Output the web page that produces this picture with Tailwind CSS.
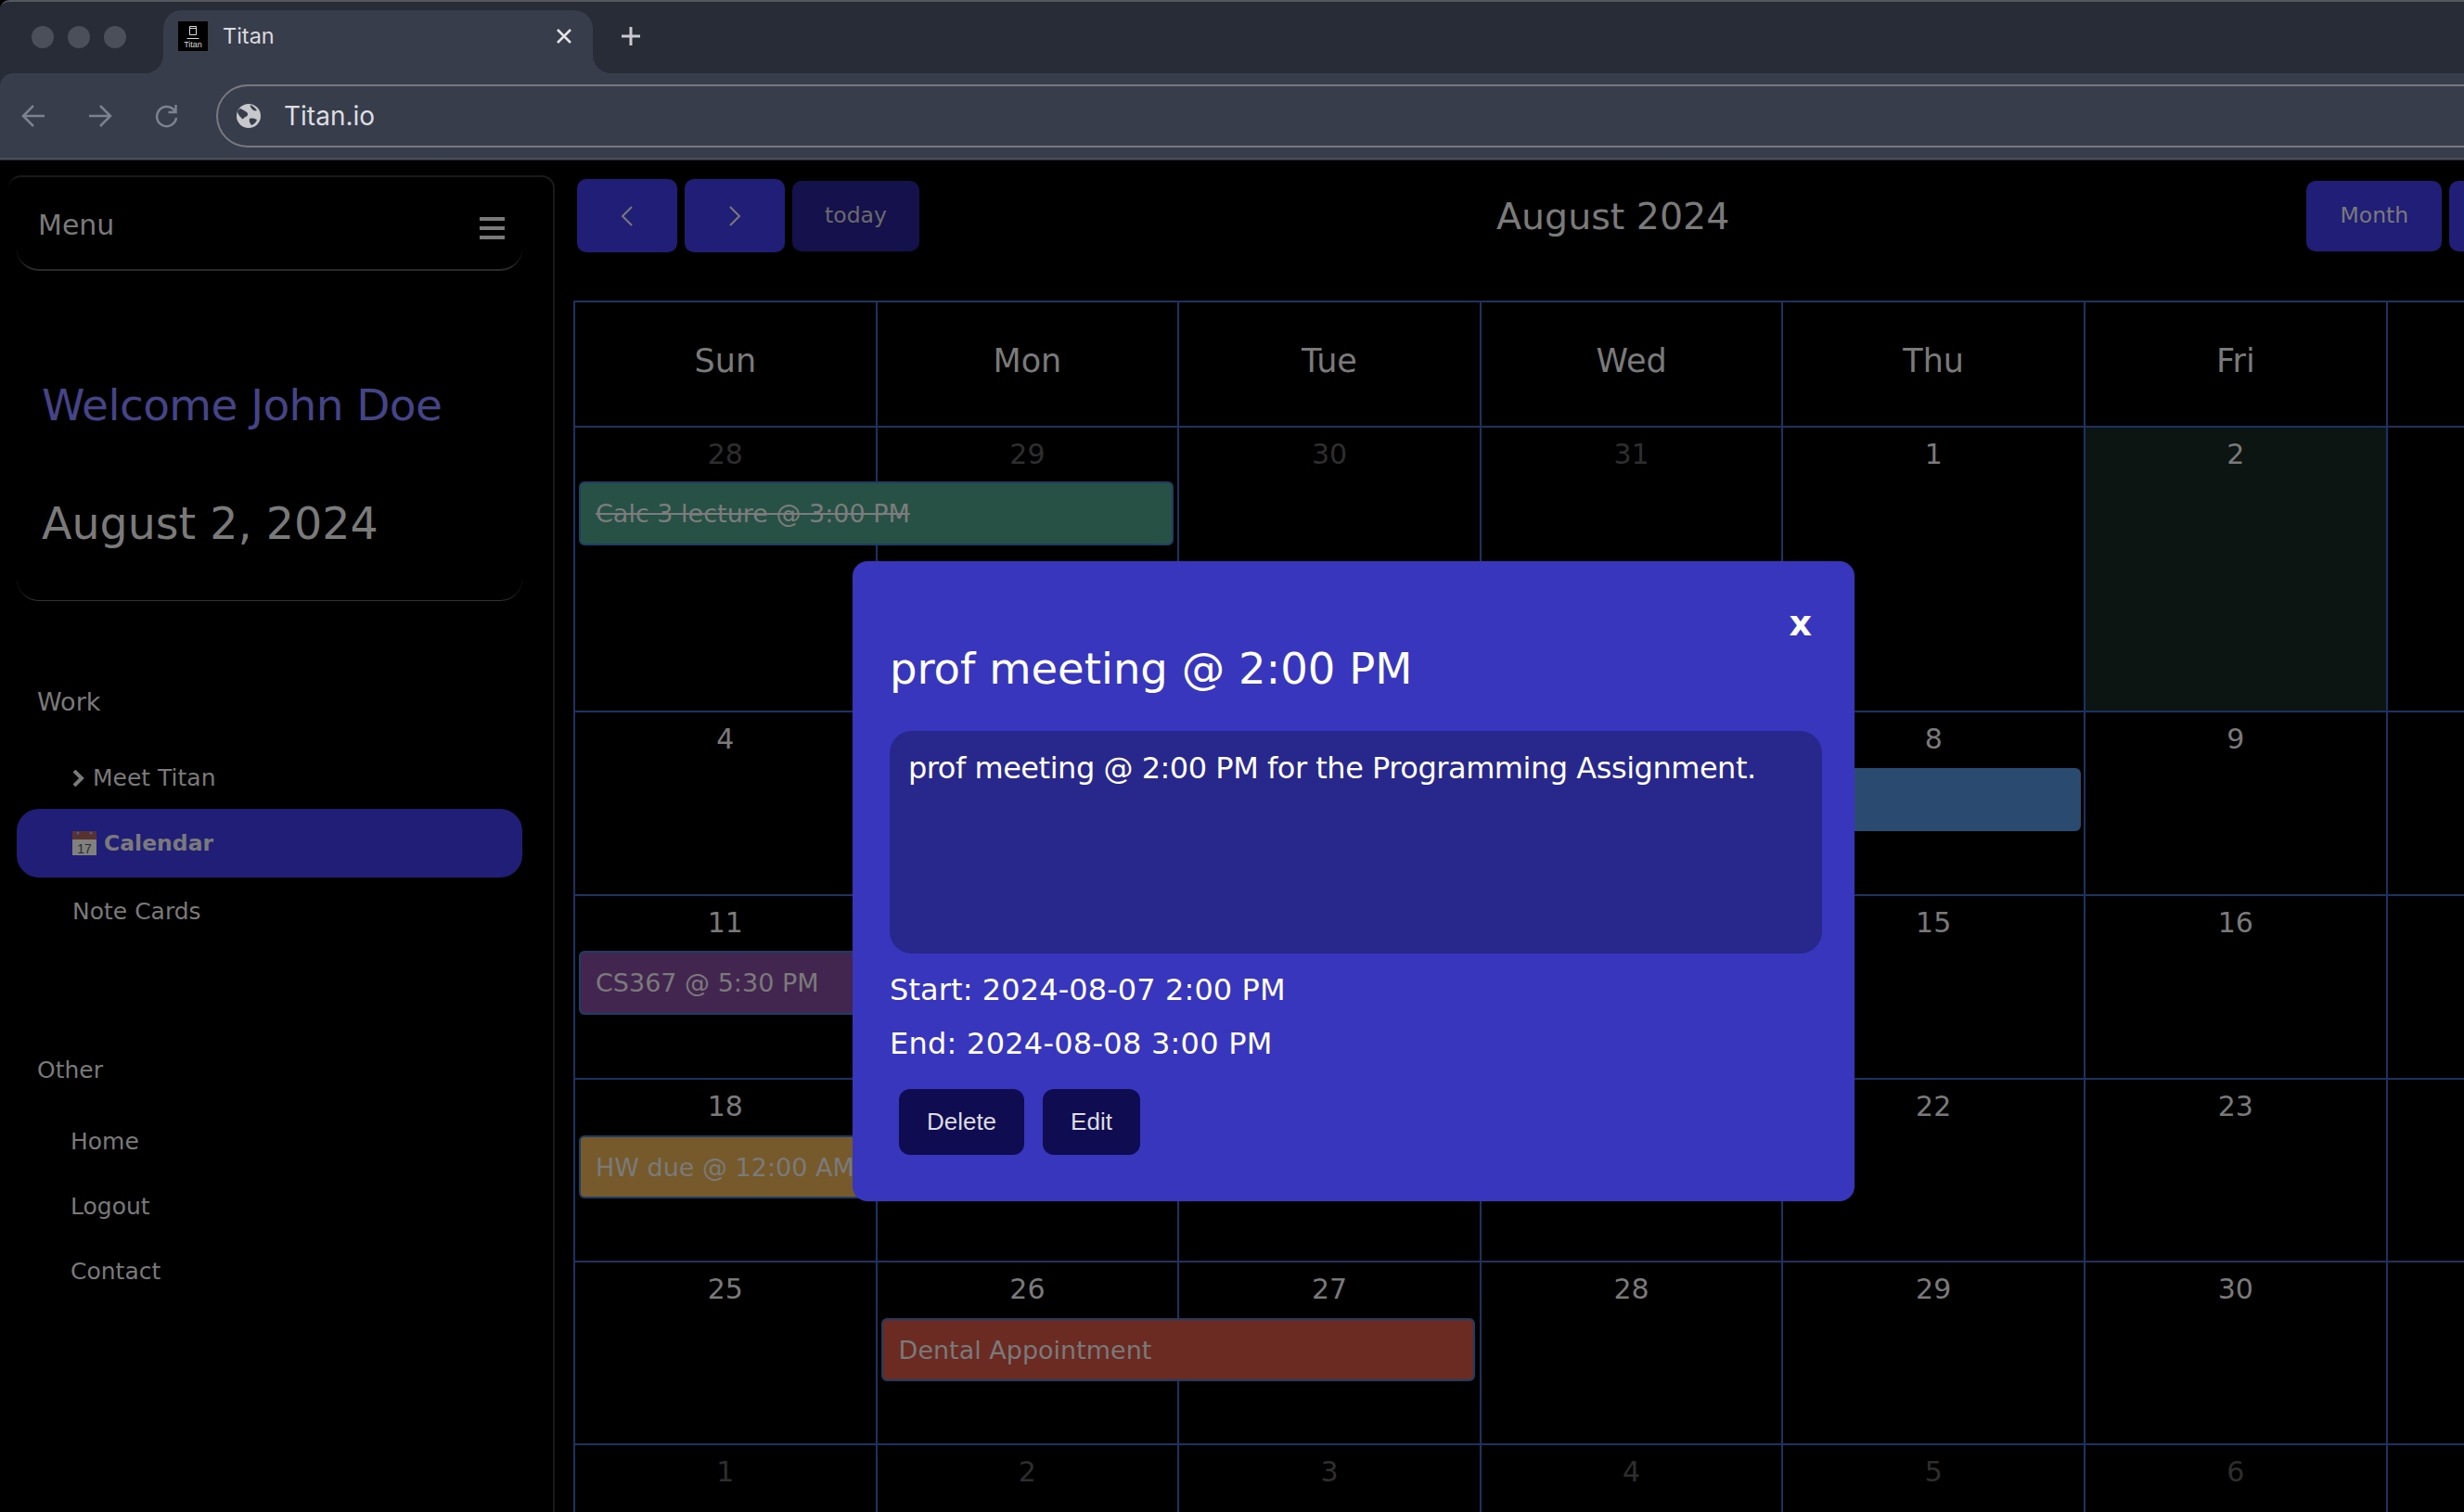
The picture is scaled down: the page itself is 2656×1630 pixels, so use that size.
<!DOCTYPE html>
<html lang="en">

<head>
    <meta charset="UTF-8">
    <meta name="viewport" content="width=device-width, initial-scale=1.0">
    <title>Titan</title>
    <script src="https://cdn.jsdelivr.net/npm/@tailwindcss/browser@4"></script>
</head>

<body class="relative w-[2656px] h-[1630px] overflow-hidden bg-black font-['DejaVu_Sans',sans-serif] text-[#7a7a7a]">
    <!-- Browser chrome -->
    <header class="h-[173px] bg-[#282c36] border-t-2 border-[#55575f] rounded-tl-[10px] font-['Inter',sans-serif]">
        <div class="flex h-[77px] items-end">
            <div class="flex gap-[15px] w-[176px] h-full pl-[34px] pt-[26px]">
                <span class="w-6 h-6 rounded-full bg-[#4b4f5a]"></span>
                <span class="w-6 h-6 rounded-full bg-[#4b4f5a]"></span>
                <span class="w-6 h-6 rounded-full bg-[#4b4f5a]"></span>
            </div>
            <div class="relative flex items-center w-[463px] h-[68px] pl-4 pb-[12px] bg-[#383d4c] rounded-t-[20px]">
                <span class="absolute -left-5 bottom-0 w-5 h-5 bg-[#383d4c]"><span class="block w-full h-full bg-[#282c36] rounded-br-[20px]"></span></span>
                <span class="absolute -right-5 bottom-0 w-5 h-5 bg-[#383d4c]"><span class="block w-full h-full bg-[#282c36] rounded-bl-[20px]"></span></span>
                <div class="flex flex-col items-center justify-end w-8 h-8 bg-black text-white pb-[3px]">
                    <svg width="16" height="16" viewBox="0 0 16 16" fill="none" stroke="#d8d8d8" stroke-width="1"><path d="M4.500 1.500h7v9h-7zM4.500 3.500h7M1.500 14.500h13"/></svg>
                    <span class="font-['Liberation_Sans',sans-serif] text-[9px] leading-[8px] text-[#d8d8d8] mt-[1px]">Titan</span>
                </div>
                <span class="ml-4 text-[23.500px] text-[#d9dade]">Titan</span>
                <svg class="ml-auto mr-[22px]" width="18" height="18" viewBox="0 0 18 18" fill="none" stroke="#e4e4e6" stroke-width="2.500"><path d="M2 2l14 14M16 2L2 16"/></svg>
            </div>
            <svg class="ml-[30px] mb-[29px]" width="22" height="22" viewBox="0 0 22 22" fill="none" stroke="#c9cad0" stroke-width="3"><path d="M11 1v20M1 11h20"/></svg>
        </div>
        <div class="flex items-center h-[93px] bg-[#383d4c] rounded-tl-[14px] border-b-2 border-[#4a4d58]">
            <svg class="ml-[23px] shrink-0" width="26" height="26" viewBox="0 0 26 26" fill="none" stroke="#7d828e" stroke-width="2.500"><path d="M25 13H2M13 2L2 13l11 11"/></svg>
            <svg class="ml-[46px] shrink-0" width="26" height="26" viewBox="0 0 26 26" fill="none" stroke="#7d828e" stroke-width="2.500"><path d="M1 13h23M13 2l11 11-11 11"/></svg>
            <svg class="ml-[46px] shrink-0" width="26" height="26" viewBox="0 0 26 26" fill="none" stroke="#7d828e" stroke-width="2.500"><path d="M21.500 8A10.500 10.500 0 1 0 23 15M22.500 1v8h-8"/></svg>
            <div class="flex items-center ml-[40px] w-[2500px] h-[68px] shrink-0 border-2 border-[#77797f] rounded-full pl-[19px]">
                <svg width="28" height="28" viewBox="0 0 28 28">
                    <circle cx="14" cy="14" r="13" fill="#c6c8cc"/>
                    <path d="M5 6c3 1 5 3 7 4 2 2 1 4-1 5-2 0-2 3-4 2-2-2-4-4-5-7 0-2 1-3 3-4zM15 17c3-1 6 0 8 1-1 3-3 5-6 6-1-2-3-4-2-7zM16 2c2 1 5 3 7 6-2 1-4 0-5-1-1-2-3-3-2-5z" fill="#383d4c"/>
                </svg>
                <span class="ml-[24px] text-[28px] text-[#dcdde1]">Titan.io</span>
            </div>
        </div>
    </header>

    <main class="flex">
        <!-- Sidebar -->
        <aside class="w-[589px] h-[1457px] shrink-0 mt-4 ml-[9px] pl-[9px] pr-[33px] border-t-2 border-r-2 border-[#1a1a1a] rounded-t-[14px]">
            <div class="flex items-center justify-between h-[101px] pl-[23px] pr-[19px] border-b-2 border-[#2a2a2a] rounded-b-[24px]">
                <span class="text-[30px] mt-[3px]">Menu</span>
                <div class="flex flex-col gap-[6px] mt-[10px]">
                    <span class="block w-[27px] h-[4px] bg-[#7a7a7a]"></span>
                    <span class="block w-[27px] h-[4px] bg-[#7a7a7a]"></span>
                    <span class="block w-[27px] h-[4px] bg-[#7a7a7a]"></span>
                </div>
            </div>

            <div class="h-[356px] pl-[27px] pt-[115px] border-b border-[#333] rounded-b-[24px]">
                <h1 class="text-[47px] tracking-[-0.6px] leading-[60px] text-[#454488]">Welcome John Doe</h1>
                <p class="text-[47.500px] leading-[60px] mt-[68px]">August 2, 2024</p>
            </div>

            <p class="mt-[92px] pl-[22px] text-[27px] leading-[34px]">Work</p>
            <ul class="mt-[48px] text-[25px] leading-[34px]">
                <li class="flex items-center pl-[60px]">
                    <svg class="mr-[9px]" width="13" height="18" viewBox="0 0 13 18" fill="none" stroke="#7a7a7a" stroke-width="4"><path d="M2 1l8 8-8 8"/></svg>
                    Meet Titan
                </li>
                <li class="flex items-center h-[74px] mt-[16px] pl-[60px] bg-[#211e78] rounded-[24px] font-bold text-[23.500px]">
                    <svg class="mr-[8px]" width="26" height="26" viewBox="0 0 26 26">
                        <rect width="26" height="26" fill="#808080"/>
                        <rect width="26" height="9" fill="#583131"/>
                        <circle cx="6" cy="2" r="1.500" fill="#4a5a9a"/>
                        <circle cx="20" cy="2" r="1.500" fill="#4a5a9a"/>
                        <text x="13" y="23.500" text-anchor="middle" font-size="14" font-weight="400" fill="#2a2a2a" font-family="Liberation Sans">17</text>
                    </svg>
                    Calendar
                </li>
                <li class="mt-[20px] pl-[60px]">Note Cards</li>
            </ul>

            <p class="mt-[137px] pl-[22px] text-[25px] leading-[34px]">Other</p>
            <ul class="mt-[43px] pl-[58px] text-[25px] leading-[34px]">
                <li>Home</li>
                <li class="mt-[36px]">Logout</li>
                <li class="mt-[36px]">Contact</li>
            </ul>
        </aside>

        <!-- Calendar -->
        <section class="shrink-0 w-[2290px] ml-[20px]">
            <div class="flex items-center mt-[20px] ml-1 h-[79px]">
                <button class="flex items-center justify-center w-[108px] h-[79px] bg-[#211e78] rounded-[10px]">
                    <svg width="14" height="22" viewBox="0 0 14 22" fill="none" stroke="#7a7a7a" stroke-width="2"><path d="M12 1L2 11l10 10"/></svg>
                </button>
                <button class="flex items-center justify-center w-[108px] h-[79px] ml-2 bg-[#211e78] rounded-[10px]">
                    <svg width="14" height="22" viewBox="0 0 14 22" fill="none" stroke="#7a7a7a" stroke-width="2"><path d="M2 1l10 10L2 21"/></svg>
                </button>
                <button class="w-[137px] h-[76px] ml-2 pt-[1px] bg-[#14114d] rounded-[10px] text-[23.500px] text-[#6b6b6b]">today</button>
                <h2 class="ml-[622px] mt-[2px] text-[39.500px] whitespace-nowrap">August 2024</h2>
                <button class="w-[146px] h-[76px] ml-[622px] pt-[1px] bg-[#211e78] rounded-[10px] text-[23.500px] shrink-0">Month</button>
                <button class="w-[146px] h-[76px] ml-2 pt-[1px] bg-[#211e78] rounded-[10px] text-[23.500px] shrink-0">Week</button>
            </div>

            <div class="grid grid-cols-[repeat(7,325.6px)] grid-rows-[135px_307px_198px_198px_197px_197px_200px] w-fit mt-[52px] border-t-2 border-l-2 border-[#1b3263] text-center text-[30px] leading-[34px] *:relative *:border-r-2 *:border-b-2 *:border-[#1b3263] *:pt-[12px]">
                <div class="text-[35px] !pt-[46px]">Sun</div>
                <div class="text-[35px] !pt-[46px]">Mon</div>
                <div class="text-[35px] !pt-[46px]">Tue</div>
                <div class="text-[35px] !pt-[46px]">Wed</div>
                <div class="text-[35px] !pt-[46px]">Thu</div>
                <div class="text-[35px] !pt-[46px]">Fri</div>
                <div class="text-[35px] !pt-[46px]">Sat</div>

                <div class="text-[#2e2e2e]">28
                    <div class="absolute top-[58px] left-1 w-[641px] h-[69px] pl-4 bg-[#275145] border-2 border-[#1c3e66] rounded-[6px] text-left text-[27px] leading-[65px] text-[#7c7c7c] line-through">Calc 3 lecture @ 3:00 PM</div>
                </div>
                <div class="text-[#2e2e2e]">29</div>
                <div class="text-[#2e2e2e]">30</div>
                <div class="text-[#2e2e2e]">31</div>
                <div>1</div>
                <div class="bg-[#0d1512]">2</div>
                <div>3</div>

                <div>4</div>
                <div>5</div>
                <div>6</div>
                <div>7
                    <div class="absolute top-[60px] left-1 w-[642px] h-[68px] pl-4 bg-[#2a4a70] rounded-[6px] text-left text-[27px] leading-[64px] whitespace-nowrap">prof meeting @ 2:00 PM</div>
                </div>
                <div>8</div>
                <div>9</div>
                <div>10</div>

                <div>11
                    <div class="absolute top-[59px] left-1 w-[316px] h-[69px] pl-4 bg-[#432650] border-2 border-[#1c3e66] rounded-[6px] text-left text-[27px] leading-[65px] whitespace-nowrap">CS367 @ 5:30 PM</div>
                </div>
                <div>12</div>
                <div>13</div>
                <div>14</div>
                <div>15</div>
                <div>16</div>
                <div>17</div>

                <div>18
                    <div class="absolute top-[60px] left-1 w-[316px] h-[68px] pl-4 bg-[#765a2b] border-2 border-[#1c3e66] rounded-[6px] text-left text-[27px] leading-[65px] whitespace-nowrap">HW due @ 12:00 AM</div>
                </div>
                <div>19</div>
                <div>20</div>
                <div>21</div>
                <div>22</div>
                <div>23</div>
                <div>24</div>

                <div>25</div>
                <div>26
                    <div class="absolute top-[60px] left-1 w-[640px] h-[68px] pl-[17px] bg-[#6b2b22] border-2 border-[#1c3e66] rounded-[6px] text-left text-[27px] leading-[65px]">Dental Appointment</div>
                </div>
                <div>27</div>
                <div>28</div>
                <div>29</div>
                <div>30</div>
                <div>31</div>

                <div class="text-[#2e2e2e]">1</div>
                <div class="text-[#2e2e2e]">2</div>
                <div class="text-[#2e2e2e]">3</div>
                <div class="text-[#2e2e2e]">4</div>
                <div class="text-[#2e2e2e]">5</div>
                <div class="text-[#2e2e2e]">6</div>
                <div class="text-[#2e2e2e]">7</div>
            </div>
        </section>
    </main>

    <!-- Event modal -->
    <div class="absolute left-[919px] top-[605px] w-[1080px] h-[690px] pt-[86px] pl-[40px] bg-[#3836bd] rounded-[16px] text-white">
        <button class="absolute top-[42px] right-[46px] text-[38px] leading-[50px] font-bold">x</button>
        <h3 class="text-[46.500px] leading-[60px]">prof meeting @ 2:00 PM</h3>
        <div class="w-[1005px] h-[240px] mt-[37px] px-5 pt-5 bg-[#28278c] rounded-[24px] text-[32px] tracking-[-0.47px] leading-[40px]">prof meeting @ 2:00 PM for the Programming Assignment.</div>
        <p class="mt-[22px] text-[32px] tracking-[0.1px] leading-[34px]">Start: 2024-08-07 2:00 PM</p>
        <p class="mt-[24px] text-[32px] tracking-[0.25px] leading-[34px]">End: 2024-08-08 3:00 PM</p>
        <div class="flex gap-5 mt-[32px] ml-[10px] font-['Liberation_Sans',sans-serif] text-[26px] text-[#dcdce0]">
            <button class="w-[135px] h-[71px] bg-[#0f0c52] rounded-[12px]">Delete</button>
            <button class="w-[105px] h-[71px] bg-[#0f0c52] rounded-[12px]">Edit</button>
        </div>
    </div>
</body>

</html>
